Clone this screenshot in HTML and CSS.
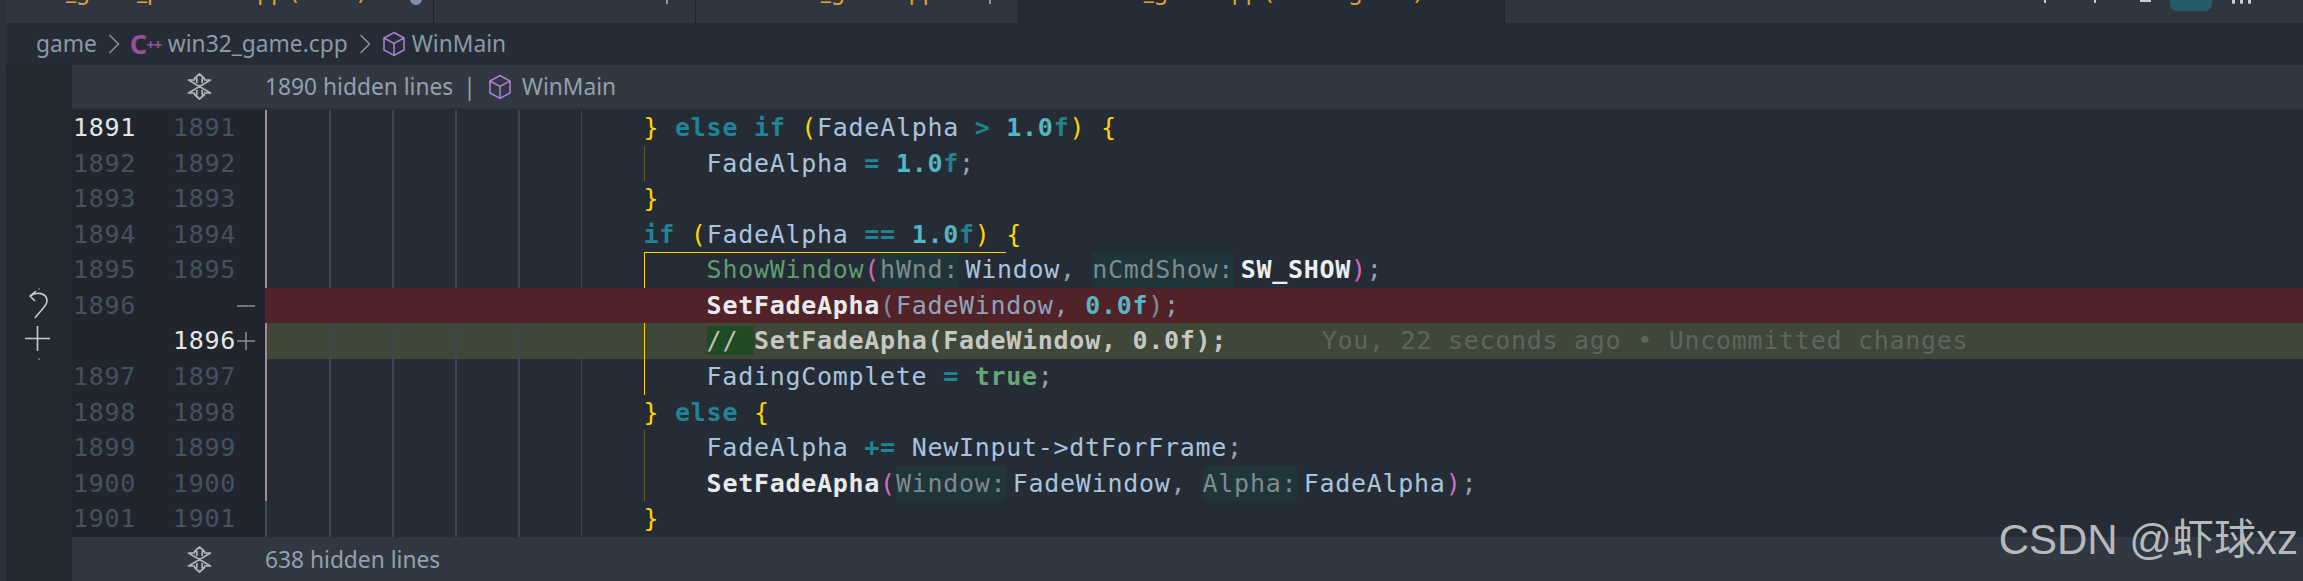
FILE: index.html
```
<!DOCTYPE html>
<html lang="en">
<head>
<meta charset="utf-8">
<title>win32_game.cpp (Working Tree)</title>
<link rel="stylesheet" href="styles.css">
</head>
<body>
<div class="page">
  <div class="strip"></div>
  <div class="main">
    <div class="tabs">
      <div class="tab tab-first"><span class="tab-label">_game_platform.cpp (Index)</span><span class="dirty"></span></div>
      <div class="tab tab-plain"><span class="tab-tick"></span></div>
      <div class="tab tab-second"><span class="tab-label">win32_game.cpp</span><span class="tab-tick"></span></div>
      <div class="tab tab-active"><span class="tab-label">win32_game.cpp (Working Tree)</span></div>
      <div class="tab-rest">
        <span class="tick tick-a"></span>
        <span class="tick tick-b"></span>
        <span class="bar-mark"></span>
        <span class="toggle"></span>
        <span class="more"><i></i><i></i><i></i></span>
      </div>
    </div>
    <div class="crumbs">
      <span class="crumb crumb-folder">game</span>
      <svg class="chev" viewBox="0 0 12 20"><path d="M1.5 1 L10.5 10 L1.5 19"/></svg>
      <span class="cpp"><b>C</b><em>++</em></span>
      <span class="crumb crumb-file">win32_game.cpp</span>
      <svg class="chev chev-b" viewBox="0 0 12 20"><path d="M1.5 1 L10.5 10 L1.5 19"/></svg>
      <svg class="cube cube-crumb" viewBox="0 0 24 26"><path d="M12 1.5 L22 7 V19 L12 24.5 L2 19 V7 Z M2 7 L12 12.5 L22 7 M12 12.5 V24.5"/></svg>
      <span class="crumb">WinMain</span>
    </div>
    <div class="editor">
      <div class="margin">
        <span class="dot"></span>
        <svg class="undo" viewBox="0 0 24 30"><path d="M3 6 C10 1 20 3 20 11 C20 16 12 22 8 28 M9 1 L3 6 L8 11"/></svg>
        <svg class="plus" viewBox="0 0 25 25"><path d="M0 12.5 H25 M12.5 0 V25"/></svg>
        <span class="dot dot-low"></span>
      </div>
      <div class="pane">
        <div class="fold fold-top">
          <svg class="unfold" viewBox="0 0 25 27"><path d="M8 7 H1.500 L23.500 20 H17 M17 7 H23.500 L1.500 20 H8 M9.800 10 V5.500 H7.500 L12.500 1 L17.500 5.500 H15.200 V10 M9.800 17 V21.500 H7.500 L12.500 26 L17.500 21.500 H15.200 V17"/></svg>
          <span>1890 hidden lines</span>
          <span class="pipe">|</span>
          <svg class="cube" viewBox="0 0 24 26"><path d="M12 1.500 L22 7 V19 L12 24.500 L2 19 V7 Z M2 7 L12 12.500 L22 7 M12 12.500 V24.500"/></svg>
          <span>WinMain</span>
        </div>
        <div class="lines">
          <i class="guide g-base"></i><i class="guide g-base-end"></i>
          <i class="guide g1"></i><i class="guide g2"></i><i class="guide g3"></i><i class="guide g4"></i><i class="guide g5"></i>
          <i class="guide g-dim-a"></i><i class="guide g-dim-b"></i><i class="guide g-active"></i>

          <div class="row"><span class="old now">1891</span><span class="new">1891</span><span class="sign"></span><code class="code">                        <b class="br">}</b> <b class="kw">else if</b> <b class="br">(</b>FadeAlpha <b class="kw">&gt;</b> <b class="num">1.0</b><b class="suf">f</b><b class="br">)</b> <b class="br">{</b></code></div>
          <div class="row"><span class="old">1892</span><span class="new">1892</span><span class="sign"></span><code class="code">                            FadeAlpha <b class="kw">=</b> <b class="num">1.0</b><b class="suf">f</b><span class="pn">;</span></code></div>
          <div class="row"><span class="old">1893</span><span class="new">1893</span><span class="sign"></span><code class="code">                        <b class="br">}</b></code></div>
          <div class="row"><span class="old">1894</span><span class="new">1894</span><span class="sign"></span><code class="code">                        <b class="kw">if</b> <b class="br">(</b>FadeAlpha <b class="kw">==</b> <b class="num">1.0</b><b class="suf">f</b><b class="br">)</b> <b class="br">{</b></code></div>
          <div class="row"><span class="old">1895</span><span class="new">1895</span><span class="sign"></span><code class="code">                            <span class="fn">ShowWindow</span><span class="pk">(</span><span class="hint">hWnd:</span>Window<span class="pn">,</span> <span class="hint hint-next">nCmdShow:</span><b class="const">SW_SHOW</b><span class="pk">)</span><span class="pn">;</span></code></div>
          <div class="row row-del"><span class="old">1896</span><span class="new"></span><span class="sign"><svg viewBox="0 0 20 20"><path d="M1 10 H19"/></svg></span><code class="code">                            <b class="call">SetFadeApha</b><span class="dimp">(</span><span class="dimi">FadeWindow</span><span class="pn">,</span> <b class="num">0.0</b><b class="num">f</b><span class="dimp">)</span><span class="pn">;</span></code></div>
          <div class="row row-add"><span class="old"></span><span class="new now">1896</span><span class="sign"><svg viewBox="0 0 20 20"><path d="M1 10 H19 M10 1 V19"/></svg></span><code class="code">                            <span class="ins">// </span><b class="addt">SetFadeApha(FadeWindow, 0.0f);</b>      <span class="blame">You, 22 seconds ago • Uncommitted changes</span></code></div>
          <div class="row"><span class="old">1897</span><span class="new">1897</span><span class="sign"></span><code class="code">                            FadingComplete <b class="kw">=</b> <b class="lit">true</b><span class="pn">;</span></code></div>
          <div class="row"><span class="old">1898</span><span class="new">1898</span><span class="sign"></span><code class="code">                        <b class="br">}</b> <b class="kw">else</b> <b class="br">{</b></code></div>
          <div class="row"><span class="old">1899</span><span class="new">1899</span><span class="sign"></span><code class="code">                            FadeAlpha <b class="kw">+=</b> NewInput-&gt;dtForFrame<span class="pn">;</span></code></div>
          <div class="row"><span class="old">1900</span><span class="new">1900</span><span class="sign"></span><code class="code">                            <b class="call">SetFadeApha</b><span class="pk">(</span><span class="hint">Window:</span>FadeWindow<span class="pn">,</span> <span class="hint hint-next">Alpha:</span>FadeAlpha<span class="pk">)</span><span class="pn">;</span></code></div>
          <div class="row"><span class="old">1901</span><span class="new">1901</span><span class="sign"></span><code class="code">                        <b class="br">}</b></code></div>
        </div>
        <div class="fold fold-bottom">
          <svg class="unfold" viewBox="0 0 25 27"><path d="M8 7 H1.500 L23.500 20 H17 M17 7 H23.500 L1.500 20 H8 M9.800 10 V5.500 H7.500 L12.500 1 L17.500 5.500 H15.200 V10 M9.800 17 V21.500 H7.500 L12.500 26 L17.500 21.500 H15.200 V17"/></svg>
          <span>638 hidden lines</span>
        </div>
      </div>
    </div>
  </div>
</div>
<div class="watermark">CSDN @虾球xz</div>
</body>
</html>
```
FILE: styles.css
```
* { box-sizing: border-box; }
html, body { margin: 0; padding: 0; }
body {
  width: 2303px;
  height: 581px;
  overflow: hidden;
  position: relative;
  background: #252c35;
  font-family: "Noto Sans", sans-serif;
  font-size: 22.75px;
}
.page { display: flex; height: 581px; }
.strip { width: 6px; background: #2c323b; flex: none; }
.main { flex: 1; display: flex; flex-direction: column; min-width: 0; }

/* tabs */
.tabs { display: flex; height: 23px; flex: none; overflow: hidden; }
.tab {
  display: flex;
  align-items: flex-start;
  height: 23px;
  background: #2f3640;
  border-right: 1px solid #1f242b;
  padding-left: 60px;
  color: #e2a03f;
  flex: none;
}
.tab-first { width: 428px; }
.tab-plain { width: 262px; padding-left: 0; }
.tab-second { width: 323px; padding-left: 61px; }
.tab-active { width: 486px; background: #252c35; padding-left: 61px; }
.tab-label { display: block; line-height: 24px; margin-top: -21px; white-space: pre; }
.tab-tick { width: 2px; height: 4px; background: #8a97a6; margin: 0 27px 0 auto; }
.dirty {
  width: 12px;
  height: 12px;
  border-radius: 50%;
  background: #7f90a8;
  margin: -7px 11px 0 auto;
}
.tab-rest {
  flex: 1;
  background: #2f3640;
  display: flex;
  align-items: flex-start;
  padding-left: 539px;
}
.tick { width: 2px; height: 3px; background: #c8ccd0; }
.tick-b { margin-left: 48px; }
.bar-mark { width: 11px; height: 2px; background: #c8ccd0; margin-left: 44px; }
.toggle { width: 42px; height: 11px; background: #265c68; border-radius: 0 0 7px 7px; margin-left: 19px; }
.more { display: flex; gap: 5px; margin-left: 20px; }
.more i { width: 3px; height: 4px; background: #c8ccd0; border-radius: 0 0 2px 2px; display: block; }

/* breadcrumbs */
.crumbs {
  height: 42px;
  flex: none;
  display: flex;
  align-items: center;
  padding-left: 30px;
  color: #8a9aab;
  background: #252c35;
}
.crumb { line-height: 30px; white-space: pre; }
.chev { width: 12px; height: 20px; margin: 0 10px 0 11px; fill: none; stroke: #8a9aab; stroke-width: 1.4; flex: none; }
.cpp { color: #984f9c; display: flex; align-items: center; width: 38px; line-height: 30px; flex: none; }
.cpp b { font-size: 27px; line-height: 30px; }
.cpp em { font-style: normal; font-weight: 700; font-size: 15px; margin-left: -1px; letter-spacing: -1px; }
.chev-b { margin-right: 11px; }
.cube { width: 24px; height: 26px; fill: none; stroke: #b180d7; stroke-width: 1.5; flex: none; }
.cube-crumb { margin-right: 6px; }

/* editor */
.editor { flex: 1; display: flex; min-height: 0; }
.margin {
  width: 66px;
  flex: none;
  background: #232931;
  display: flex;
  flex-direction: column;
  align-items: center;
  padding-top: 223px;
}
.dot { width: 2px; height: 2px; background: #5c646c; flex: none; }
.dot-low { margin-top: 7px; }
.undo { width: 24px; height: 30px; fill: none; stroke: #c4ccd4; stroke-width: 1.6; flex: none; }
.plus { width: 25px; height: 25px; margin: 6px 4px 0 0; fill: none; stroke: #c4ccd4; stroke-width: 1.6; flex: none; }
.pane { flex: 1; display: flex; flex-direction: column; min-width: 0; }

/* fold bars */
.fold {
  display: flex;
  align-items: center;
  background: #313842;
  color: #93a1ad;
  padding-left: 115px;
  flex: none;
}
.fold-top { height: 45px; background: linear-gradient(#313842 93%, #272d36); padding-bottom: 2px; }
.fold-bottom { height: 44px; }
.unfold { width: 25px; height: 27px; margin-right: 53px; fill: none; stroke: #b0b6bc; stroke-width: 1.7; stroke-linejoin: round; flex: none; }
.pipe { margin: 0 12px 0 10px; }
.fold .cube { margin-right: 10px; }

/* diff rows */
.lines { position: relative; flex: none; height: 427px; }
.row {
  display: flex;
  height: 35.58px;
  line-height: 35.58px;
  position: relative;
  font-family: "DejaVu Sans Mono", "Liberation Mono", monospace;
  font-size: 25px;
  letter-spacing: 0.72px;
}
.old, .new, .sign {
  height: 100%;
  background: #21262e;
  color: #44525f;
  flex: none;
}
.old { width: 65px; padding-left: 1px; }
.new { width: 99px; text-align: right; }
.sign { width: 29px; display: flex; align-items: center; color: #8a8f94; }
.sign svg { width: 20px; height: 20px; fill: none; stroke: #8b9096; stroke-width: 1.5; }
.now { color: #e4e6e8; }
.code { font: inherit; white-space: pre; color: #a9c4de; flex: 1; min-width: 0; }
.code b { font-weight: 700; }
.row-del { background: #522229; z-index: 3; }
.row-add { background: #3f4739; }

.br { color: #ffd400; font-weight: 400 !important; }
.kw { color: #1f8494; }
.num { color: #56b6c2; }
.suf { color: #25808c; }
.pn { color: #94a2ae; }
.fn { color: #5e9e6e; }
.pk { color: #d36ac2; }
.lit { color: #67a57a; }
.const { color: #eceef2; }
.call { color: #e8eaee; }
.dimp { color: #7f8f9e; }
.dimi { color: #8fa3b8; }
.ins { background: #1f4a23; color: #b9c2b6; }
.addt { color: #c6c6c2; }
.blame { color: #5d665c; }
.hint {
  display: inline-block;
  height: 35.58px;
  vertical-align: top;
  background: #20343b;
  color: #7e8b8b;
  margin-right: 6.5px;
}
.hint-next { margin-left: 0.5px; }

/* guides */
.guide { position: absolute; top: 0; bottom: 0; width: 1.5px; z-index: 2; background: #3e4650; }
.g-base { left: 193px; bottom: 35.58px; background: #a58a8a; }
.g-base-end { left: 193px; top: auto; height: 35.58px; background: #3a4a5c; }
.g1 { left: 257px; }
.g2 { left: 320px; }
.g3 { left: 383px; }
.g4 { left: 446px; }
.g5 { left: 508.500px; background: #1e4a6e; }
.g-dim-a { left: 571.500px; top: 35.58px; bottom: auto; height: 35.58px; background: #5c5a2e; }
.g-dim-b { left: 571.500px; top: 320.200px; bottom: auto; height: 71.200px; background: #5c5a2e; }
.g-active {
  left: 571.500px;
  top: 142.300px;
  bottom: auto;
  width: 362px;
  height: 142.300px;
  background: none;
  border-left: 1.5px solid #ffd400;
  border-top: 1.5px solid #ffd400;
}

/* watermark over the screenshot */
.watermark {
  position: absolute;
  right: 5px;
  top: 517px;
  font-family: "Liberation Sans", "Noto Sans CJK SC", sans-serif;
  font-size: 42px;
  line-height: 46px;
  color: #b6babd;
  z-index: 5;
}
```
